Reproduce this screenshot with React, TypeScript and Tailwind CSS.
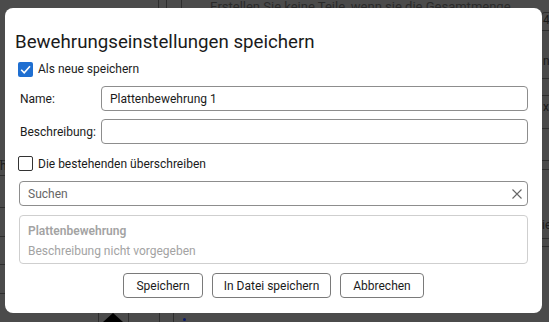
import React from "react";

const font = { fontFamily: 'Roboto, "Noto Sans", sans-serif' };

function Check({ checked }: { checked?: boolean }) {
  if (checked) {
    return (
      <span className="flex h-[15px] w-[15px] items-center justify-center rounded-[2px] bg-[#1f6fd1]">
        <svg width="13" height="13" viewBox="0 0 13 13">
          <path d="M2.2 6.8 L5.2 9.8 L11 3.2" fill="none" stroke="white" strokeWidth="1.6" />
        </svg>
      </span>
    );
  }
  return <span className="h-[15px] w-[15px] rounded-[2px] border border-[#333] bg-white" />;
}

export default function App() {
  return (
    <div className="relative h-[322px] w-[549px] overflow-hidden bg-[#4b4b4b]" style={font}>
      {/* dimmed app background */}
      <div className="absolute left-[158px] top-0 h-[8px] w-px bg-[#2e2e2e]" />
      <div className="absolute left-[166px] top-0 h-[8px] w-px bg-[#2e2e2e]" />
      <div className="absolute left-[181px] top-0 h-[8px] w-px bg-[#2e2e2e]" />
      <div className="absolute left-[210px] top-[-3px] text-[13px] text-[#2a2a2a]">Erstellen Sie keine Teile, wenn sie die Gesamtmenge überschreiten</div>
      <div className="absolute left-[541px] top-[12px] h-[10px] w-[8px] rounded-tl-[4px] border-l border-t border-[#2e2e2e]" />
      <div className="absolute left-[543px] top-[14px] text-[12px] leading-none text-[#1a1a1a]">4</div>
      <div className="absolute left-[543px] top-[55px] text-[12px] leading-none text-[#1a1a1a]">n</div>
      <div className="absolute left-[543px] top-[101px] text-[12px] leading-none text-[#1a1a1a]">x</div>
      <div className="absolute left-[542px] top-[219px] text-[12px] leading-none text-[#1a1a1a]">ie</div>
      {[30, 78, 95, 128, 160, 169, 238, 246].map((y) => (
        <div key={y} className="absolute left-[542px] h-px w-[7px] bg-[#2e2e2e]" style={{ top: y }} />
      ))}
      {[160, 175, 207, 236, 264, 293].map((y) => (
        <div key={y} className="absolute left-0 h-px w-[5px] bg-[#2e2e2e]" style={{ top: y }} />
      ))}
      <div className="absolute left-0 top-[160px] text-[12px] leading-none text-[#1a1a1a]">h</div>
      {[98, 128, 159, 173].map((x) => (
        <div key={x} className="absolute top-[313px] h-[9px] w-px bg-[#2e2e2e]" style={{ left: x }} />
      ))}
      <div className="absolute left-[103px] top-[313px] h-0 w-0 border-x-[10px] border-b-[9px] border-x-transparent border-b-black" />
      <div className="absolute left-[183px] top-[318px] h-[3px] w-[3px] rounded-full bg-[#0a1a6a]" />

      {/* dialog */}
      <div className="absolute left-[5px] top-[8px] flex h-[305px] w-[537px] flex-col rounded-[8px] bg-white px-[14px] pt-[22px] text-[12px] text-[#1b1b1b]">
        <div className="-ml-[4px] h-[24px] text-[18.7px] leading-[24px] text-[#1b1b1b]">Bewehrungseinstellungen speichern</div>

        <div className="-ml-[1px] mt-[7px] flex h-[16px] items-center gap-[5px]">
          <Check checked />
          <span className="leading-[16px]">Als neue speichern</span>
        </div>

        <div className="mt-[9px] flex h-[25px] items-center">
          <span className="w-[82px] pl-[1px]">Name:</span>
          <div className="flex h-[25px] flex-1 items-center rounded-[4px] border border-[#8d8d8d] px-[8px]">Plattenbewehrung 1</div>
        </div>

        <div className="mt-[8px] flex h-[25px] items-center">
          <span className="w-[82px] pl-[1px]">Beschreibung:</span>
          <div className="h-[25px] flex-1 rounded-[4px] border border-[#8d8d8d]" />
        </div>

        <div className="-ml-[1px] mt-[12px] flex h-[15px] items-center gap-[5px]">
          <Check />
          <span className="leading-[16px]">Die bestehenden überschreiben</span>
        </div>

        <div className="mt-[10px] flex h-[25px] items-center rounded-[4px] border border-[#8d8d8d] pl-[8px] pr-[4px]">
          <span className="flex-1 text-[#666]">Suchen</span>
          <svg width="12" height="12" viewBox="0 0 12 12">
            <path d="M1.5 1.5 L10.5 10.5 M10.5 1.5 L1.5 10.5" stroke="#666" strokeWidth="1.1" />
          </svg>
        </div>

        <div className="mt-[9px] flex h-[49px] flex-col rounded-[4px] border border-[#cfcfcf] px-[8px] pt-[5px] text-[#a3a3a3]">
          <span className="font-semibold leading-[20px]">Plattenbewehrung</span>
          <span className="leading-[20px]">Beschreibung nicht vorgegeben</span>
        </div>

        <div className="mt-[9px] flex justify-center gap-[9px]">
          <button className="flex h-[25px] w-[80px] items-center justify-center rounded-[4px] border border-[#7a7a7a] bg-white">Speichern</button>
          <button className="flex h-[25px] w-[119px] items-center justify-center rounded-[4px] border border-[#7a7a7a] bg-white">In Datei speichern</button>
          <button className="flex h-[25px] w-[84px] items-center justify-center rounded-[4px] border border-[#7a7a7a] bg-white">Abbrechen</button>
        </div>
      </div>
    </div>
  );
}
